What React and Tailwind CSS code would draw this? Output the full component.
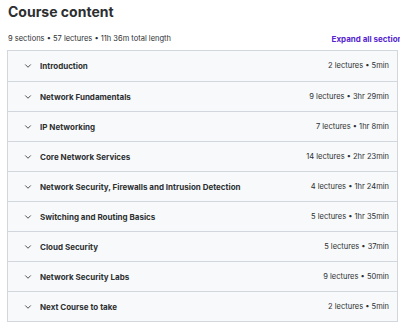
import { ChevronDown } from "lucide-react";

const sections = [
  { title: "Introduction", meta: "2 lectures • 5min" },
  { title: "Network Fundamentals", meta: "9 lectures • 3hr 29min" },
  { title: "IP Networking", meta: "7 lectures • 1hr 8min" },
  { title: "Core Network Services", meta: "14 lectures • 2hr 23min" },
  { title: "Network Security, Firewalls and Intrusion Detection", meta: "4 lectures • 1hr 24min" },
  { title: "Switching and Routing Basics", meta: "5 lectures • 1hr 35min" },
  { title: "Cloud Security", meta: "5 lectures • 37min" },
  { title: "Network Security Labs", meta: "9 lectures • 50min" },
  { title: "Next Course to take", meta: "2 lectures • 5min" },
];

const App = () => {
  return (
    <div
      className="w-[400px] h-[322px] overflow-hidden bg-white text-[#2d2f31]"
      style={{ fontFamily: "Inter, 'Noto Sans', sans-serif" }}
    >
      <h2 className="pl-2 pt-[3px] text-[14px] font-bold leading-[18px]">
        Course content
      </h2>

      <div className="flex items-center justify-between pl-2 mt-[13px] h-[10px] whitespace-nowrap">
        <span className="text-[7.5px] text-[#2d2f31]">
          9 sections • 57 lectures • 11h 36m total length
        </span>
        <span className="text-[8px] font-bold text-[#5624d0] -mr-[7px]">
          Expand all sections
        </span>
      </div>

      <div className="ml-[7px] mr-[2px] mt-[6px] border border-[#d1d7dc]">
        {sections.map((s, i) => (
          <div
            key={s.title}
            className={`h-[30px] flex items-center bg-[#f7f9fa] pl-[15px] pr-[8px] ${
              i > 0 ? "border-t border-[#d1d7dc]" : ""
            }`}
          >
            <ChevronDown size={10} strokeWidth={2} className="text-[#2d2f31] mr-[7px] shrink-0" />
            <span className="flex-1 text-[8px] font-bold truncate">{s.title}</span>
            <span className="text-[7.5px] text-[#2d2f31] whitespace-nowrap">{s.meta}</span>
          </div>
        ))}
      </div>
    </div>
  );
};

export default App;
